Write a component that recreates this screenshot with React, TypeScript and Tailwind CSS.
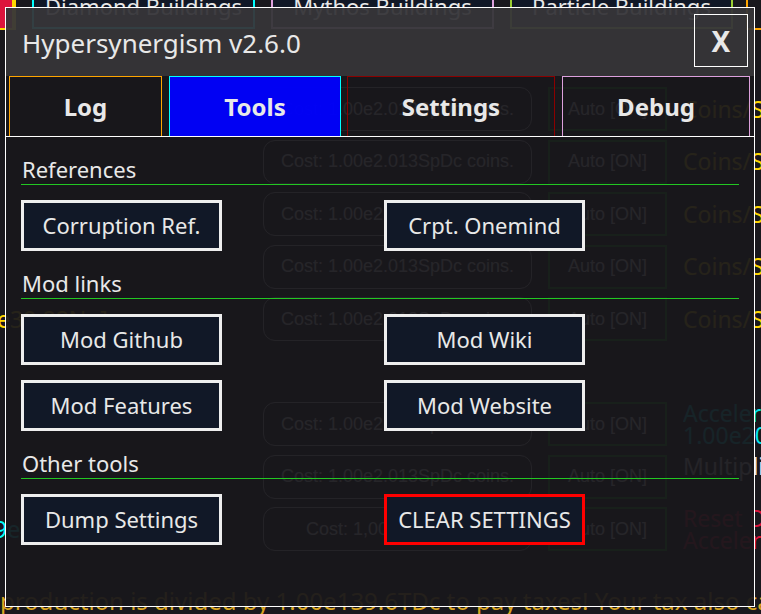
import React from "react";

type Row = {
  label?: string;
  labelColor?: string;
  labelShift?: string;
  cost?: string;
  rate?: string[];
  rateColor?: string;
  rateSize?: "big" | "small";
};

const rows: Row[] = [
  { cost: "Cost: 1.00e2.013SpDc coins.", rate: ["Coins/Sec: 1.00e20"], rateColor: "text-[#ffd700]", rateSize: "big" },
  { cost: "Cost: 1.00e2.013SpDc coins.", rate: ["Coins/Sec: 1.00e20"], rateColor: "text-[#ffd700]", rateSize: "big" },
  { cost: "Cost: 1.00e2.013SpDc coins.", rate: ["Coins/Sec: 1.00e20"], rateColor: "text-[#ffd700]", rateSize: "big" },
  { cost: "Cost: 1.00e2.013SpDc coins.", rate: ["Coins/Sec: 1.00e20"], rateColor: "text-[#ffd700]", rateSize: "big" },
  {
    label: "e39.88No]",
    labelColor: "text-[#ffd700]",
    labelShift: "-ml-[3px]",
    cost: "Cost: 1.00e2.013SpDc coins.",
    rate: ["Coins/Sec: 1.00e20"],
    rateColor: "text-[#ffd700]",
    rateSize: "big",
  },
  {},
  { cost: "Cost: 1.00e2.013SpDc coins.", rate: ["Accelerators: 1", "1.00e203.5 Boost"], rateColor: "text-[#00e5ee]", rateSize: "small" },
  { cost: "Cost: 1.00e2.013SpDc coins.", rate: ["Multiplier: 2"], rateColor: "text-[#e6e6e6]", rateSize: "small" },
  {
    label: "9e46]",
    labelColor: "text-[#00ffff]",
    labelShift: "-ml-[6px]",
    cost: "Cost: 1,000 Diamonds.",
    rate: ["Reset Diamonds", "Accelerator Boost"],
    rateColor: "text-[#dc143c]",
    rateSize: "small",
  },
];

function GameRow({ row }: { row: Row }) {
  if (!row.cost) return <div className="h-[44px]" />;
  return (
    <div className="flex h-[44px] items-center">
      <div className="w-[263px] overflow-hidden whitespace-nowrap">
        {row.label && (
          <div className={`${row.labelShift} text-[23px] ${row.labelColor}`}>
            {row.label}
          </div>
        )}
      </div>
      <div className="flex h-full w-[269px] items-center justify-center rounded-[12px] border border-[#d8d8d8] font-['Liberation_Sans',sans-serif] text-[18px] text-white">
        {row.cost}
      </div>
      <div className="ml-[16px] flex h-full w-[119px] items-center justify-center border-2 border-[#1fae1f] font-['Liberation_Sans',sans-serif] text-[18px] text-white">
        Auto [ON]
      </div>
      <div
        className={`ml-[16px] flex-1 self-stretch overflow-hidden whitespace-nowrap ${row.rateColor} ${
          row.rateSize === "big"
            ? "flex items-center text-[23px]"
            : "text-[23px] leading-[22px]"
        }`}
      >
        {row.rate!.map((l) => (
          <div key={l}>{l}</div>
        ))}
      </div>
    </div>
  );
}

function RefButton({ label, danger }: { label: string; danger?: boolean }) {
  return (
    <button
      className={`flex h-[51px] w-[201px] items-center justify-center border-[3px] bg-[#111827] text-[22px] text-[#e8e8e8] ${
        danger ? "border-[#ff0000]" : "border-[#eeeeee]"
      }`}
    >
      {label}
    </button>
  );
}

function Section({
  title,
  buttons,
  first,
}: {
  title: string;
  buttons: { label: string; danger?: boolean }[][];
  first?: boolean;
}) {
  return (
    <div className={first ? "" : "mt-[17px]"}>
      <div className="h-[31px] border-b border-[#22c722] pl-[1px] text-[22px] leading-[30px]">
        {title}
      </div>
      <div className="mt-[15px] flex flex-col gap-[15px]">
        {buttons.map((pair, i) => (
          <div key={i} className="flex gap-[162px]">
            {pair.map((b) => (
              <RefButton key={b.label} label={b.label} danger={b.danger} />
            ))}
          </div>
        ))}
      </div>
    </div>
  );
}

const tabs = [
  { label: "Log", w: "w-[153px]", ml: "ml-[3px]", cls: "border-[#ffa500]" },
  { label: "Tools", w: "w-[172px]", ml: "ml-[7px]", cls: "border-[#00ffff] bg-[#0000ff]/95" },
  { label: "Settings", w: "w-[208px]", ml: "ml-[6px]", cls: "border-[#8b0000]" },
  { label: "Debug", w: "w-[188px]", ml: "ml-[7px]", cls: "border-[#dda0dd]" },
];

export default function App() {
  return (
    <main className="relative h-[614px] w-[761px] overflow-hidden bg-[#19181d] font-['Noto_Sans',sans-serif]">
      {/* game page behind */}
      <div className="flex flex-col">
        <div className="flex h-[30px] items-start">
          <div className="h-[30px] w-[16px] border-b-2 border-r-4 border-[#ffd700] bg-[#dc143c]" />
          {[
            { t: "Diamond Buildings", b: "border-[#00ffff]", ml: "ml-[16px]" },
            { t: "Mythos Buildings", b: "border-[#dda0dd]", ml: "ml-[16px]" },
            { t: "Particle Buildings", b: "border-[#9acd32]", ml: "ml-[16px]" },
          ].map((x) => (
            <div
              key={x.t}
              className={`${x.ml} h-[29px] w-[223px] overflow-hidden border-x-2 border-b-2 bg-[#111827] text-center ${x.b}`}
            >
              <div className="-mt-[9px] text-[22px] leading-[30px] text-[#e6e6e6]">
                {x.t}
              </div>
            </div>
          ))}
          <div className="ml-[13px] h-[30px] flex-1 border-b-2 border-l-2 border-[#ffa500]" />
        </div>

        <div className="mt-[57px] flex flex-col gap-[8.5px]">
          {rows.map((r, i) => (
            <GameRow key={i} row={r} />
          ))}
        </div>

        <div className="mt-[34px] flex whitespace-nowrap text-[24px] leading-[32px]">
          <span className="-ml-[8px] w-[18px] text-[#ff2020]">]</span>
          <span className="text-[#daa520]">
            production is divided by 1.00e139.6TDc to pay taxes! Your tax also caps
          </span>
        </div>
      </div>

      {/* settings modal */}
      <div className="absolute left-[5px] top-[7px] flex h-[600px] w-[750px] flex-col border border-white bg-[#18171c]/[0.94] text-[#e8e8e8]">
        <div className="flex h-[68px] items-start justify-between bg-white/[0.12] pl-[16px] pr-[6px]">
          <span className="mt-[18px] text-[26px] leading-[34px]">Hypersynergism v2.6.0</span>
          <div className="mt-[6px] flex h-[53px] w-[54px] items-center justify-center border border-white text-[28px] font-bold">
            X
          </div>
        </div>

        <div className="flex h-[60px]">
          {tabs.map((t) => (
            <div
              key={t.label}
              className={`${t.ml} ${t.w} flex items-center justify-center border border-b-0 text-[24px] font-bold ${t.cls}`}
            >
              {t.label}
            </div>
          ))}
        </div>

        <div className="flex-1 border-t border-white px-[15px] pt-[17px]">
          <Section
            first
            title="References"
            buttons={[[{ label: "Corruption Ref." }, { label: "Crpt. Onemind" }]]}
          />
          <Section
            title="Mod links"
            buttons={[
              [{ label: "Mod Github" }, { label: "Mod Wiki" }],
              [{ label: "Mod Features" }, { label: "Mod Website" }],
            ]}
          />
          <Section
            title="Other tools"
            buttons={[[{ label: "Dump Settings" }, { label: "CLEAR SETTINGS", danger: true }]]}
          />
        </div>
      </div>
    </main>
  );
}
